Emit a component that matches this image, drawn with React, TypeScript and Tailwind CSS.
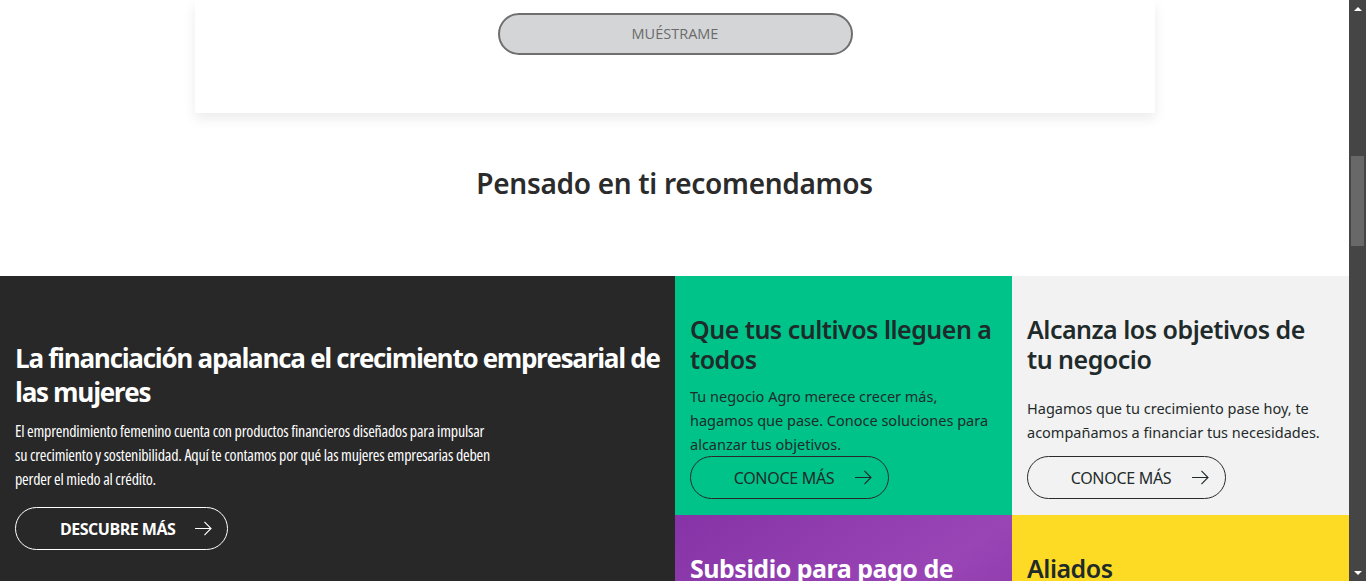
import React from 'react';

const Arrow = ({ className }: { className?: string }) => (
  <svg viewBox="0 0 20 16" className={className} fill="none" stroke="currentColor" strokeWidth="1.2">
    <path d="M1 8h17M11 1l7 7-7 7" />
  </svg>
);

interface CardProps {
  title: string;
  body: string;
  bg: string;
}

const Card = ({ title, body, bg }: CardProps) => (
  <div className={`${bg} h-[239px] px-[15px] pt-[38px] flex flex-col text-[#1f2b2b]`}>
    <h3 className="text-[25px] leading-[30px] font-semibold tracking-[-0.5px]">{title}</h3>
    <div className="h-[72px] mt-[10px] flex items-center">
      <p className="text-[14.5px] leading-[24px]">{body}</p>
    </div>
    <button className="w-[199px] h-[43px] rounded-full border border-[#2c2a29] flex items-center justify-center gap-[20px] text-[16px] pl-[28px]">
      <span className="tracking-[-0.3px]">CONOCE MÁS</span>
      <Arrow className="w-[19px] h-[15px]" />
    </button>
  </div>
);

export default function App() {
  return (
    <div className="flex h-[581px] overflow-hidden bg-white" style={{ fontFamily: '"Noto Sans", "Open Sans", sans-serif' }}>
      <div className="w-[1349px] flex flex-col">
        <div className="px-[195px]">
          <div className="w-[960px] bg-white shadow-[0_6px_12px_rgba(0,0,0,0.08)] pt-[13px] pb-[58px] flex justify-center">
            <button className="w-[355px] h-[42px] rounded-full bg-[#d4d5d7] border-2 border-[#6f6f6f] text-[#6b6b6b] text-[14.5px] [font-family:'Open_Sans',sans-serif]">
              MUÉSTRAME
            </button>
          </div>
        </div>

        <h2 className="mt-[52px] text-center text-[28px] leading-[36px] font-semibold text-[#2b2b2b] tracking-[-0.3px]">
          Pensado en ti recomendamos
        </h2>

        <div className="mt-[75px] grid grid-cols-[675px_337px_337px]">
          <div className="row-span-2 bg-[#282828] text-white px-[15px] pt-[65px] [font-family:'Open_Sans',sans-serif]">
            <h3 className="text-[26px] leading-[34px] font-bold tracking-[-1.3px]">
              La financiación apalanca el crecimiento empresarial de las mujeres
            </h3>
            <p className="mt-[10px] w-[505px] text-[16px] leading-[24px] tracking-[-0.2px] [font-stretch:75%]">
              El emprendimiento femenino cuenta con productos financieros diseñados para impulsar
              <br />
              su crecimiento y sostenibilidad. Aquí te contamos por qué las mujeres empresarias deben perder el miedo al crédito.
            </p>
            <button className="mt-[16px] w-[213px] h-[43px] rounded-full border border-white flex items-center pl-[44px] gap-[19px] text-[16px] font-bold tracking-[-0.5px]">
              <span>DESCUBRE MÁS</span>
              <Arrow className="w-[19px] h-[15px]" />
            </button>
          </div>
          <Card
            bg="bg-[#00c389]"
            title="Que tus cultivos lleguen a todos"
            body="Tu negocio Agro merece crecer más, hagamos que pase. Conoce soluciones para alcanzar tus objetivos."
          />
          <Card
            bg="bg-[#f2f2f2]"
            title="Alcanza los objetivos de tu negocio"
            body="Hagamos que tu crecimiento pase hoy, te acompañamos a financiar tus necesidades."
          />
          <div className="h-[239px] px-[15px] pt-[38px] bg-gradient-to-br from-[#8533a6] via-[#9a45b6] to-[#7c2a9e] text-white">
            <h3 className="text-[25px] leading-[30px] font-bold tracking-[-0.5px]">Subsidio para pago de nómina</h3>
          </div>
          <div className="h-[239px] px-[15px] pt-[38px] bg-[#fdda24] text-[#1f2b2b]">
            <h3 className="text-[25px] leading-[30px] font-semibold tracking-[-0.5px]">Aliados</h3>
          </div>
        </div>
      </div>

      <div className="w-[17px] bg-[#454545] flex flex-col items-center">
        <div className="h-[17px] flex items-center justify-center">
          <div className="w-0 h-0 border-l-[4px] border-r-[4px] border-b-[4px] border-l-transparent border-r-transparent border-b-white" />
        </div>
        <div className="mt-[139px] w-[13px] h-[90px] bg-[#686868]" />
        <div className="flex-1" />
        <div className="h-[17px] flex items-center justify-center">
          <div className="w-0 h-0 border-l-[4px] border-r-[4px] border-t-[4px] border-l-transparent border-r-transparent border-t-white" />
        </div>
      </div>
    </div>
  );
}
